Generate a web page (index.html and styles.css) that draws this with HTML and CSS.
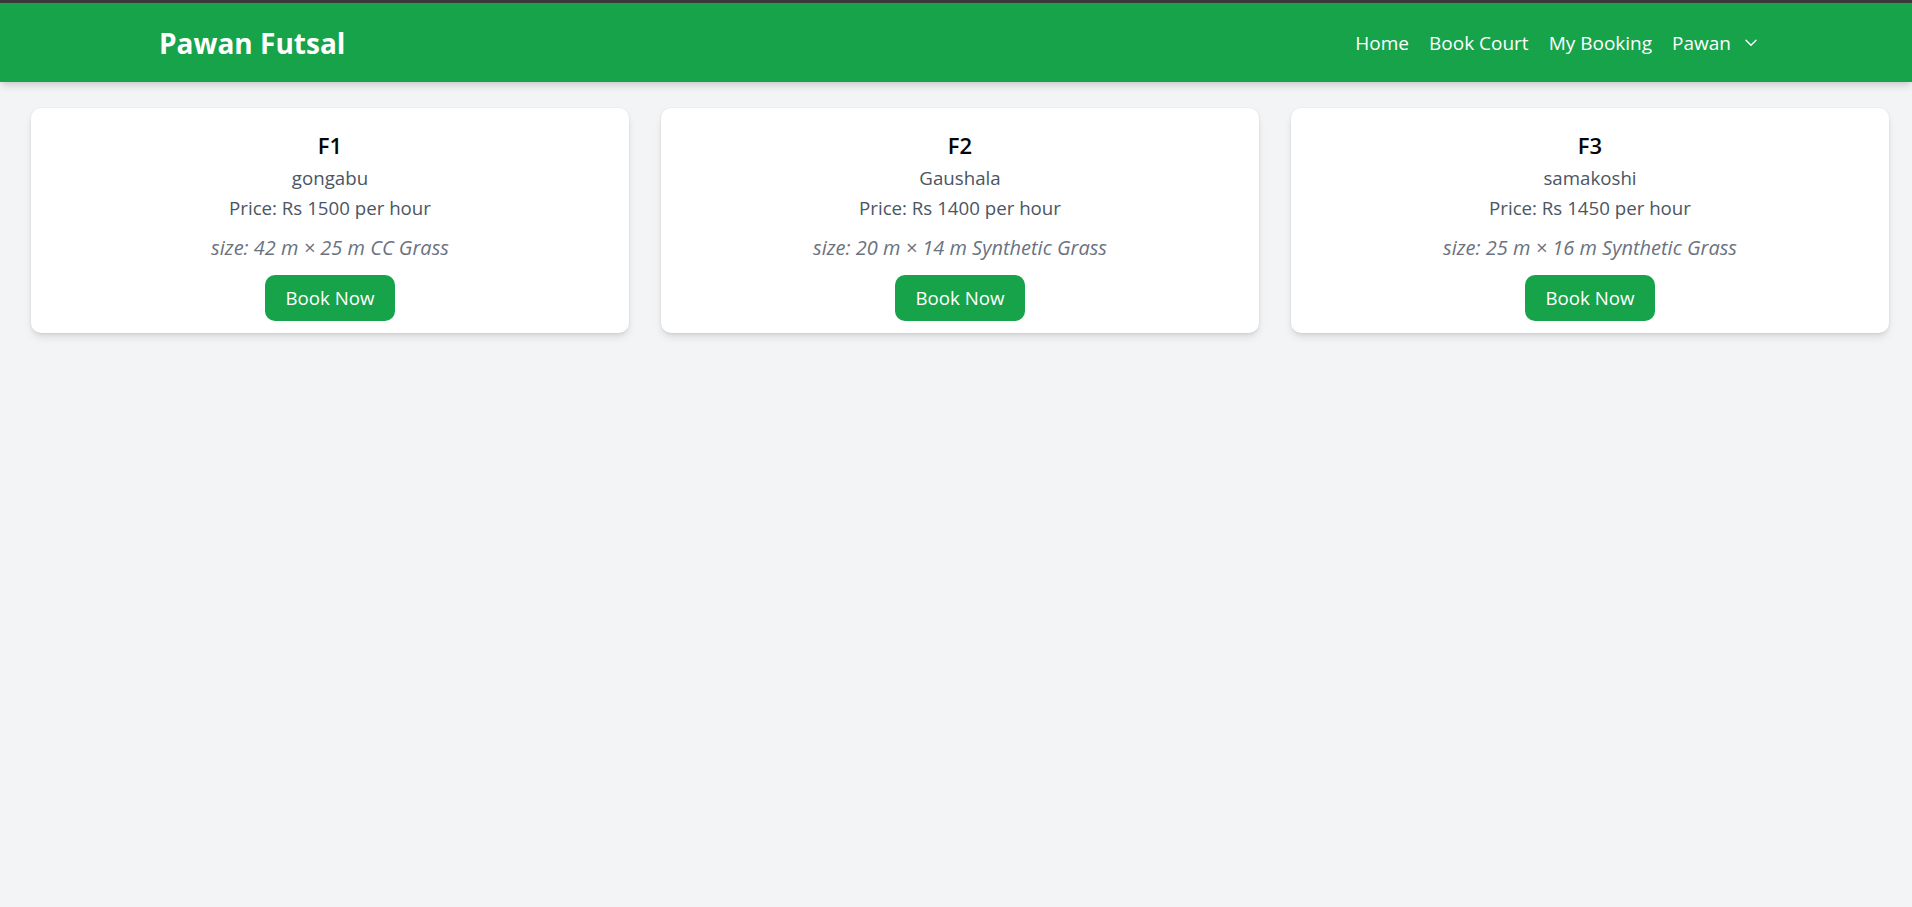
FILE: index.html
```html
<!DOCTYPE html>
<html lang="en">
<head>
<meta charset="utf-8">
<title>Pawan Futsal</title>
<link rel="stylesheet" href="styles.css">
</head>
<body>
<header class="topbar">
  <div class="topbar-inner">
    <a class="brand" href="#">Pawan Futsal</a>
    <nav class="nav">
      <a class="nav-link" href="#">Home</a>
      <a class="nav-link" href="#">Book Court</a>
      <a class="nav-link" href="#">My Booking</a>
      <button class="nav-user" type="button">
        <span>Pawan</span>
        <svg class="chevron" width="12" height="8" viewBox="0 0 12 8" aria-hidden="true"><path d="M1 1.2 L6 6.2 L11 1.2" fill="none" stroke="#ffffff" stroke-width="1.4" stroke-linecap="round" stroke-linejoin="round"/></svg>
      </button>
    </nav>
  </div>
</header>
<main class="courts">
  <div class="card">
    <h2 class="card-title">F1</h2>
    <p class="card-loc">gongabu</p>
    <p class="card-price">Price: Rs 1500 per hour</p>
    <p class="card-size">size: 42 m × 25 m CC Grass</p>
    <button class="btn" type="button">Book Now</button>
  </div>
  <div class="card">
    <h2 class="card-title">F2</h2>
    <p class="card-loc">Gaushala</p>
    <p class="card-price">Price: Rs 1400 per hour</p>
    <p class="card-size">size: 20 m × 14 m Synthetic Grass</p>
    <button class="btn" type="button">Book Now</button>
  </div>
  <div class="card">
    <h2 class="card-title">F3</h2>
    <p class="card-loc">samakoshi</p>
    <p class="card-price">Price: Rs 1450 per hour</p>
    <p class="card-size">size: 25 m × 16 m Synthetic Grass</p>
    <button class="btn" type="button">Book Now</button>
  </div>
</main>
</body>
</html>
```
FILE: styles.css
```css
* { box-sizing: border-box; }
html, body { margin: 0; padding: 0; }
body {
  background: #f3f4f6;
  font-family: "Open Sans", "Noto Sans", sans-serif;
  font-size: 18.7px;
  line-height: 30px;
  color: #111827;
  min-height: 907px;
  border-top: 3px solid #3a3a3a;
}
.topbar {
  background: #16a34a;
  height: 79px;
  box-shadow: 0 5px 8px -1px rgba(0,0,0,0.12), 0 2px 5px -2px rgba(0,0,0,0.1);
  position: relative;
  z-index: 1;
}
.topbar-inner {
  height: 100%;
  display: flex;
  align-items: center;
  justify-content: space-between;
  padding: 0 155px 0 159px;
}
.brand {
  color: #ffffff;
  font-weight: 700;
  font-size: 28px;
  line-height: 36px;
  text-decoration: none;
}
.nav {
  display: flex;
  align-items: center;
  gap: 20px;
}
.nav-link {
  color: #ffffff;
  text-decoration: none;
  font-size: 19px;
}
.nav-user {
  display: flex;
  align-items: center;
  gap: 14px;
  background: none;
  border: 0;
  padding: 0;
  color: #ffffff;
  font: inherit;
  font-size: 19px;
  cursor: pointer;
}
.chevron { display: block; margin-top: 1px; }
.courts {
  display: grid;
  grid-template-columns: repeat(3, 1fr);
  gap: 32px;
  padding: 26px 23px 0 31px;
}
.card {
  background: #ffffff;
  border-radius: 10px;
  box-shadow: 0 5px 8px -1px rgba(0,0,0,0.1), 0 2px 5px -2px rgba(0,0,0,0.1), 0 0 0 1px rgba(0,0,0,0.02);
  padding: 20px 20px 12px;
  display: flex;
  flex-direction: column;
  align-items: center;
  text-align: center;
}
.card-title {
  margin: 0;
  font-size: 22px;
  font-weight: 600;
  line-height: 35px;
  color: #050505;
}
.card-loc, .card-price {
  margin: 0;
  color: #4b5563;
}
.card-size {
  margin: 10px 0 0;
  font-size: 20px;
  font-style: italic;
  color: #6b7280;
}
.btn {
  margin-top: 12px;
  background: #16a34a;
  color: #ffffff;
  border: 0;
  border-radius: 10px;
  padding: 8px 20px;
  font: inherit;
  line-height: 30px;
  cursor: pointer;
}
```
